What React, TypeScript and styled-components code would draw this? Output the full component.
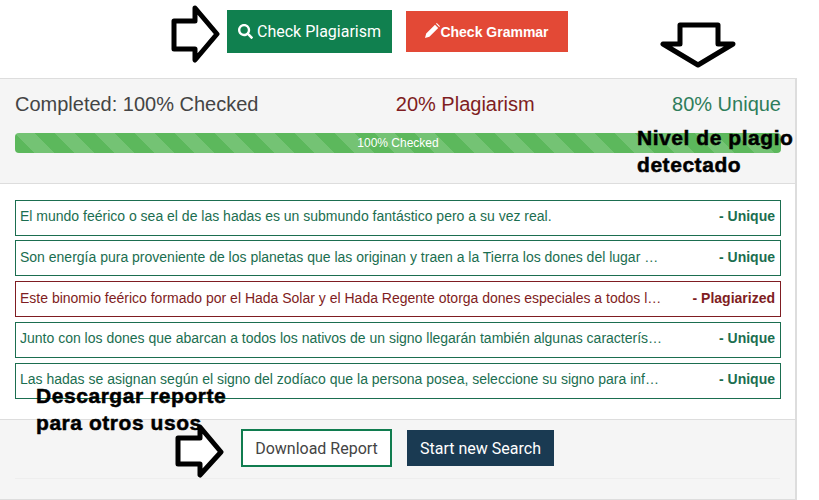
import React from 'react'
import styled, { createGlobalStyle } from 'styled-components'
import { FaSearch } from 'react-icons/fa'

const GlobalStyle = createGlobalStyle`
    html, body {
        margin: 0;
        padding: 0;
        background: #fff;
        overflow: hidden;
    }
    body {
        font-family: "Liberation Sans", Arial, sans-serif;
    }
`

const Page = styled.div`
    position: relative;
    width: 819px;
    height: 500px;
    overflow: hidden;
`

const Toolbar = styled.div`
    display: flex;
    align-items: center;
    height: 78px;
    padding: 0 0 15px 227px;
    box-sizing: border-box;
    gap: 14px;
`

const ActionButton = styled.div<{ $bg: string; $w: number; $h: number; $bold?: boolean }>`
    display: flex;
    align-items: center;
    justify-content: center;
    gap: ${p => (p.$bold ? 0 : 4)}px;
    width: ${p => p.$w}px;
    height: ${p => p.$h}px;
    background: ${p => p.$bg};
    color: #fff;
    font-family: ${p => (p.$bold ? '"Liberation Sans", Arial' : 'Roboto, Arial')}, sans-serif;
    font-size: ${p => (p.$bold ? 14 : 16)}px;
    font-weight: ${p => (p.$bold ? 700 : 400)};
`

const PencilIcon = styled.svg`
    width: 15px;
    height: 15px;
    margin-top: -2px;
    fill: #fff;
`

const Panel = styled.div`
    width: 797px;
    height: 422px;
    box-sizing: border-box;
    border: 1px solid #ddd;
    border-left: 0;
    border-right-width: 2px;
    display: flex;
    flex-direction: column;
`

const PanelHead = styled.div`
    height: 105px;
    box-sizing: border-box;
    padding: 12px 14px 0 15px;
    background: #f5f5f5;
    border-bottom: 1px solid #ddd;
`

const Stats = styled.div`
    display: flex;
    justify-content: space-between;
    font-size: 20px;
    line-height: 26px;
`

const Stat = styled.span<{ $color: string }>`
    color: ${p => p.$color};
`

const Progress = styled.div`
    position: relative;
    margin-top: 16px;
    height: 20px;
    border-radius: 4px;
    background-color: #5cb85c;
    background-image: linear-gradient(
        45deg,
        rgba(255, 255, 255, 0.15) 25%,
        transparent 25%,
        transparent 50%,
        rgba(255, 255, 255, 0.15) 50%,
        rgba(255, 255, 255, 0.15) 75%,
        transparent 75%,
        transparent
    );
    background-size: 40px 40px;
    color: #fff;
    font-size: 12px;
    line-height: 20px;
    text-align: center;
`

const PanelBody = styled.div`
    height: 236px;
    box-sizing: border-box;
    padding: 15.7px 14px 0 15px;
    background: #fff;
    border-bottom: 1px solid #ddd;
    display: flex;
    flex-direction: column;
    gap: 4.75px;
`

const Row = styled.div<{ $color: string }>`
    display: flex;
    align-items: center;
    justify-content: space-between;
    height: 36px;
    box-sizing: border-box;
    padding: 0 5px 3px 4px;
    border: 1px solid ${p => p.$color};
    color: ${p => p.$color};
    font-size: 14px;
`

const RowText = styled.span`
    width: 644px;
    white-space: nowrap;
    overflow: hidden;
    text-overflow: ellipsis;
`

const RowStatus = styled.b`
    font-size: 14px;
    white-space: nowrap;
`

const PanelFoot = styled.div`
    flex: 1;
    background: #f5f5f5;
    padding: 0 15px;
`

const FootButtons = styled.div`
    display: flex;
    align-items: center;
    height: 59px;
    box-sizing: border-box;
    padding: 0 0 2px 226px;
    gap: 15px;
    border-bottom: 1px solid #eee;
`

const OutlineButton = styled.div`
    display: flex;
    align-items: center;
    justify-content: center;
    width: 151px;
    height: 38px;
    box-sizing: border-box;
    border: 2px solid #107c4f;
    background: #fff;
    color: #444;
    font-family: Roboto, Arial, sans-serif;
    font-size: 16px;
`

const DarkButton = styled.div`
    display: flex;
    align-items: center;
    justify-content: center;
    width: 147px;
    height: 36px;
    background: #1a3a52;
    color: #fff;
    font-family: Roboto, Arial, sans-serif;
    font-size: 16px;
`

const Note = styled.div<{ $x: number; $y: number }>`
    position: absolute;
    left: ${p => p.$x}px;
    top: ${p => p.$y}px;
    color: #000;
    font-size: 21px;
    font-weight: 700;
    line-height: 27px;
    letter-spacing: 0.55px;
    -webkit-text-stroke: 0.5px #000;
    white-space: nowrap;
`

const ArrowSvg = styled.svg<{ $x: number; $y: number }>`
    position: absolute;
    left: ${p => p.$x}px;
    top: ${p => p.$y}px;
    fill: #fff;
    stroke: #000;
    stroke-width: 5;
    stroke-linejoin: round;
`

const GREEN = '#1b6e50'
const RED = '#7f1d22'

const rows = [
    { text: 'El mundo feérico o sea el de las hadas es un submundo fantástico pero a su vez real.', bad: false },
    { text: 'Son energía pura proveniente de los planetas que las originan y traen a la Tierra los dones del lugar de donde provienen', bad: false },
    { text: 'Este binomio feérico formado por el Hada Solar y el Hada Regente otorga dones especiales a todos los nativos', bad: true },
    { text: 'Junto con los dones que abarcan a todos los nativos de un signo llegarán también algunas características', bad: false },
    { text: 'Las hadas se asignan según el signo del zodíaco que la persona posea, seleccione su signo para informarse', bad: false },
]

function App() {
    return (
        <Page>
            <GlobalStyle />
            <Toolbar>
                <ActionButton $bg="#10804f" $w={165} $h={43}>
                    <FaSearch size={15} />
                    Check Plagiarism
                </ActionButton>
                <ActionButton $bg="#e34936" $w={162} $h={41} $bold>
                    <PencilIcon viewBox="0 0 15 15">
                        <path d="M0 15 L1.2 10.6 L10 1.8 L13.2 5 L4.4 13.8 Z M11 0.8 L11.8 0 L15 3.2 L14.2 4 Z" />
                    </PencilIcon>
                    Check Grammar
                </ActionButton>
            </Toolbar>
            <Panel>
                <PanelHead>
                    <Stats>
                        <Stat $color="#444">Completed: 100% Checked</Stat>
                        <Stat $color={RED}>20% Plagiarism</Stat>
                        <Stat $color="#2e7d5b">80% Unique</Stat>
                    </Stats>
                    <Progress>100% Checked</Progress>
                </PanelHead>
                <PanelBody>
                    {rows.map(r => (
                        <Row key={r.text} $color={r.bad ? RED : GREEN}>
                            <RowText>{r.text}</RowText>
                            <RowStatus>{r.bad ? '- Plagiarized' : '- Unique'}</RowStatus>
                        </Row>
                    ))}
                </PanelBody>
                <PanelFoot>
                    <FootButtons>
                        <OutlineButton>Download Report</OutlineButton>
                        <DarkButton>Start new Search</DarkButton>
                    </FootButtons>
                </PanelFoot>
            </Panel>

            <ArrowSvg $x={170} $y={4} width={50} height={60} viewBox="0 0 50 60">
                <path d="M4 17 H25 V4 L47 30 L25 56 V45 H4 Z" />
            </ArrowSvg>
            <ArrowSvg $x={660} $y={22} width={76} height={46} viewBox="0 0 76 46">
                <path d="M20 3 H58 V22 H73 L38 43 L3 22 H20 Z" />
            </ArrowSvg>
            <ArrowSvg $x={174} $y={424} width={50} height={54} viewBox="0 0 50 54">
                <path d="M4 14 H26 V3 L47 28 L26 51 V40 H4 Z" />
            </ArrowSvg>

            <Note $x={637} $y={124}>Nivel de plagio<br />detectado</Note>
            <Note $x={36} $y={382}>Descargar reporte<br />para otros usos</Note>
        </Page>
    )
}

export default App
